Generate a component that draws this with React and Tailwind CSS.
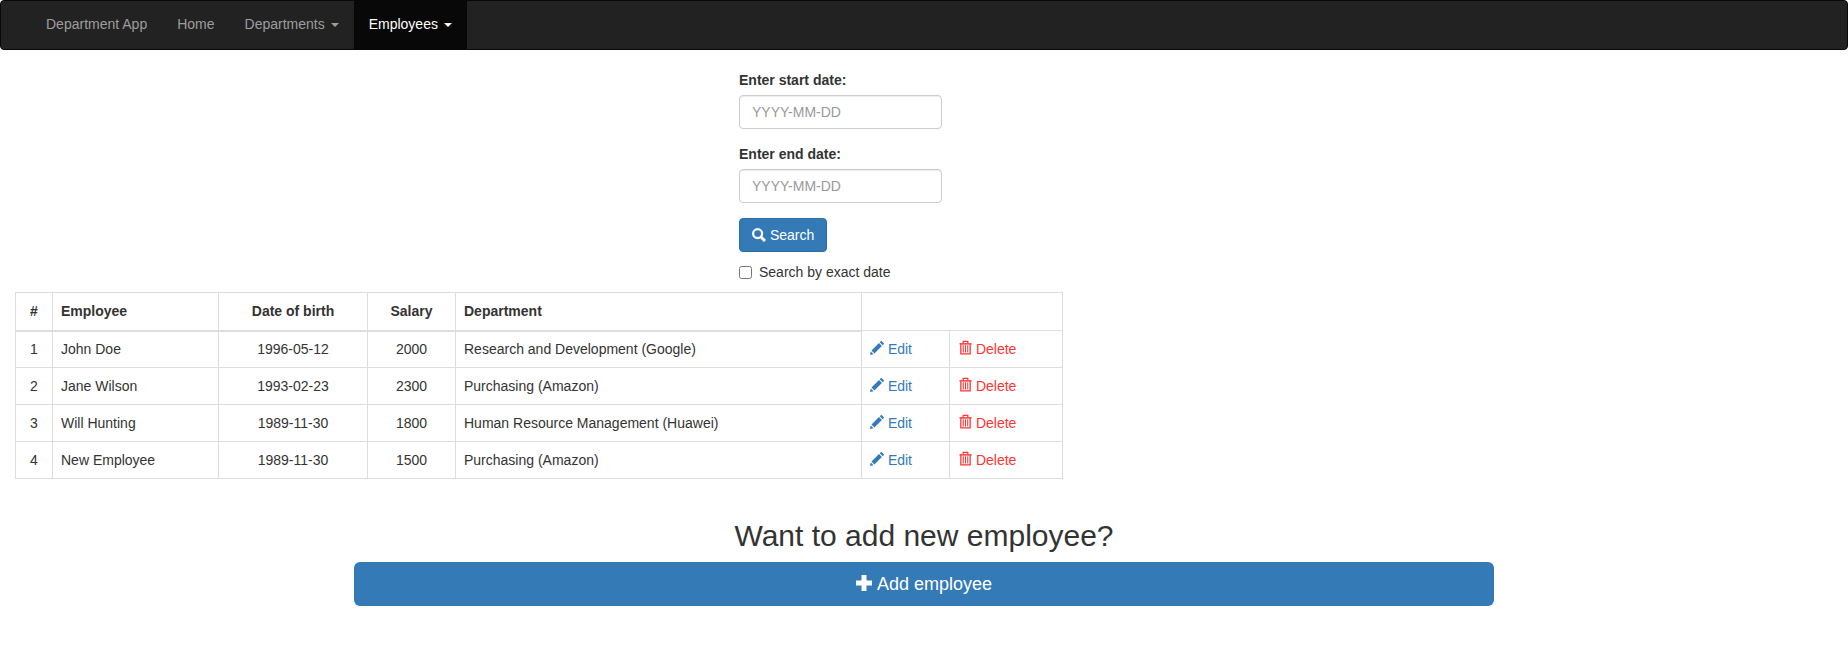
import React from 'react';

const employees = [
  { id: 1, name: 'John Doe', dob: '1996-05-12', salary: 2000, department: 'Research and Development (Google)' },
  { id: 2, name: 'Jane Wilson', dob: '1993-02-23', salary: 2300, department: 'Purchasing (Amazon)' },
  { id: 3, name: 'Will Hunting', dob: '1989-11-30', salary: 1800, department: 'Human Resource Management (Huawei)' },
  { id: 4, name: 'New Employee', dob: '1989-11-30', salary: 1500, department: 'Purchasing (Amazon)' }
];

const Caret = () => (
  <span className="inline-block ml-[6px] align-middle w-0 h-0 border-x-4 border-t-4 border-x-transparent border-t-current" />
);

const SearchIcon = () => (
  <svg viewBox="0 0 14 14" className="w-[14px] h-[14px] inline-block align-[-2px]" fill="none" stroke="currentColor">
    <circle cx="5.6" cy="5.6" r="4.5" strokeWidth="2.2" />
    <path d="M8.8 8.8 L13 13" strokeWidth="3" />
  </svg>
);

const PencilIcon = () => (
  <svg viewBox="0 0 14 14" className="w-[14px] h-[14px] inline-block align-[-1px]" fill="currentColor">
    <path d="M0 14 L0.8 10.4 L3.6 13.2 Z" />
    <path d="M1.5 9.6 L9 2.1 L11.9 5 L4.4 12.5 Z" />
    <path d="M9.8 1.3 L11 0.1 Q11.4 -0.1 11.8 0.2 L13.8 2.2 Q14.1 2.6 13.9 3 L12.7 4.2 Z" />
  </svg>
);

const TrashIcon = () => (
  <svg viewBox="0 0 14 15" className="ml-px w-[13px] h-[15px] inline-block align-[-1px]" fill="none" stroke="currentColor" strokeWidth="1.1">
    <path d="M0.5 3.6 H13.5" strokeWidth="1.6" />
    <path d="M4.5 3 V1 H9.5 V3" strokeWidth="1.3" />
    <path d="M2 4 V14.4 H12 V4" strokeWidth="1.4" />
    <path d="M4.6 5 V13 M7 5 V13 M9.4 5 V13" />
  </svg>
);

const PlusIcon = () => (
  <svg viewBox="0 0 16 16" className="mr-px w-[16px] h-[16px] inline-block align-[-1px]" fill="currentColor">
    <path d="M5.5 0 H10.5 V5.5 H16 V10.5 H10.5 V16 H5.5 V10.5 H0 V5.5 H5.5 Z" />
  </svg>
);

function DateField({ label }) {
  return (
    <div className="mb-[15px]">
      <label className="block mb-[5px] font-bold">{label}</label>
      <input
        placeholder="YYYY-MM-DD"
        className="block w-[203px] h-[34px] px-3 border border-[#ccc] rounded bg-white text-[#555] placeholder:text-[#999] shadow-[inset_0_1px_1px_rgba(0,0,0,0.075)] outline-none"
      />
    </div>
  );
}

export default function App() {
  return (
    <div className="min-h-[646px] bg-white text-[#333] text-sm leading-[20px] font-['Liberation_Sans',Arial,sans-serif]">
      {/* Navbar */}
      <nav className="h-[50px] flex pl-[30px] bg-[#222] border border-[#080808] rounded text-[#9d9d9d]">
        <a className="px-[15px] pt-[13px]">Department App</a>
        <a className="px-[15px] pt-[13px]">Home</a>
        <a className="px-[15px] pt-[13px]">Departments<Caret /></a>
        <a className="px-[15px] pt-[13px] bg-[#080808] text-white">Employees<Caret /></a>
      </nav>

      {/* Search form */}
      <form className="mt-[20px] ml-[739px] w-[300px]">
        <DateField label="Enter start date:" />
        <DateField label="Enter end date:" />
        <button type="button" className="h-[34px] px-3 rounded bg-[#337ab7] border border-[#2e6da4] text-white">
          <SearchIcon /> Search
        </button>
        <label className="flex items-center mt-[10px] h-[20px]">
          <input type="checkbox" className="w-[13px] h-[13px] mr-[7px]" />
          Search by exact date
        </label>
      </form>

      {/* Employees */}
      <table className="mt-[10px] ml-[15px] w-[1047px] table-fixed border-collapse">
        <colgroup>
          <col className="w-[37px]" />
          <col className="w-[166px]" />
          <col className="w-[149px]" />
          <col className="w-[88px]" />
          <col className="w-[406px]" />
          <col className="w-[88px]" />
          <col className="w-[113px]" />
        </colgroup>
        <thead>
          <tr className="h-[38px]">
            <th className="border border-[#ddd] border-b-2 px-2 text-center">#</th>
            <th className="border border-[#ddd] border-b-2 px-2 text-left">Employee</th>
            <th className="border border-[#ddd] border-b-2 px-2 text-center">Date of birth</th>
            <th className="border border-[#ddd] border-b-2 px-2 text-center">Salary</th>
            <th className="border border-[#ddd] border-b-2 px-2 text-left">Department</th>
            <th colSpan={2} className="border border-[#ddd]" />
          </tr>
        </thead>
        <tbody>
          {employees.map((e) => (
            <tr key={e.id} className="h-[37px]">
              <td className="border border-[#ddd] px-2 text-center">{e.id}</td>
              <td className="border border-[#ddd] px-2">{e.name}</td>
              <td className="border border-[#ddd] px-2 text-center">{e.dob}</td>
              <td className="border border-[#ddd] px-2 text-center">{e.salary}</td>
              <td className="border border-[#ddd] px-2">{e.department}</td>
              <td className="border border-[#ddd] px-2 text-[#337ab7]"><PencilIcon /> Edit</td>
              <td className="border border-[#ddd] px-2 text-[#ff3333]"><TrashIcon /> Delete</td>
            </tr>
          ))}
        </tbody>
      </table>

      {/* Add employee */}
      <div className="mt-[40px] mx-auto w-[1140px] text-center">
        <h2 className="text-[30px] leading-[33px] mb-[10px]">Want to add new employee?</h2>
        <button type="button" className="w-full h-[44px] rounded-md bg-[#337ab7] text-white text-lg">
          <PlusIcon /> Add employee
        </button>
      </div>
    </div>
  );
}
